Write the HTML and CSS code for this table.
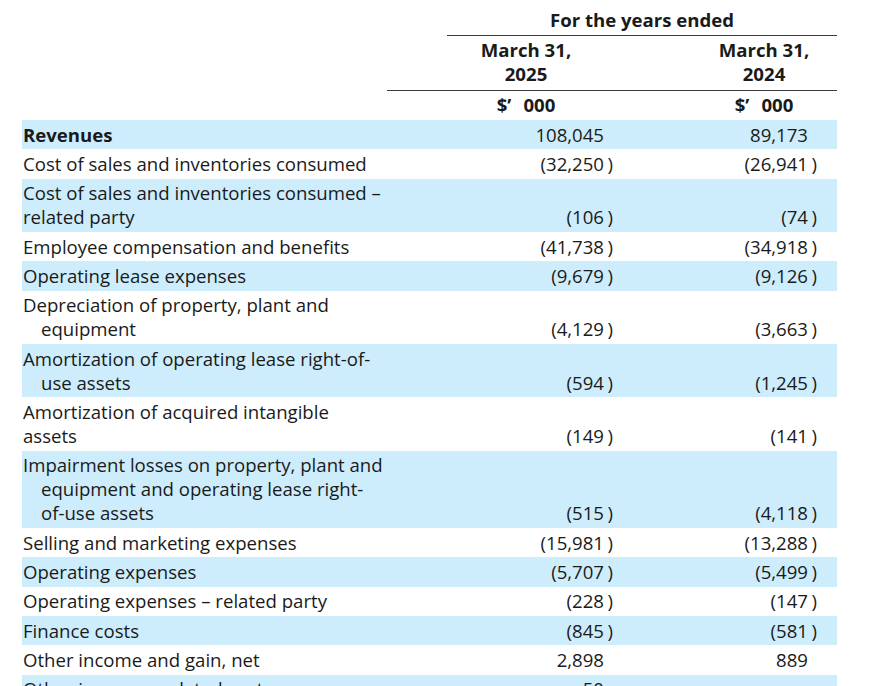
FILE: index.html
```html
<!DOCTYPE html>
<html lang="en">
<head>
<meta charset="utf-8">
<title>Statement of operations</title>
<link rel="stylesheet" href="styles.css">
</head>
<body>
<div class="sheet">
  <div class="head">
    <div class="h-years">For the years ended</div>
    <div class="h-dates">
      <div class="h-col1">March 31,<br>2025</div>
      <div class="h-col2">March 31,<br>2024</div>
    </div>
    <div class="h-units">
      <div class="h-col1">$’<span class="gap"></span>000</div>
      <div class="h-col2">$’<span class="gap"></span>000</div>
    </div>
  </div>
  <div class="rows">
    <div class="row"><div class="lbl strong"><span class="ln">Revenues</span></div><div class="num n1">108,045<span class="p"></span></div><div class="num n2">89,173<span class="p"></span></div></div>
    <div class="row"><div class="lbl"><span class="ln">Cost of sales and inventories consumed</span></div><div class="num n1">(32,250<span class="p">)</span></div><div class="num n2">(26,941<span class="p">)</span></div></div>
    <div class="row"><div class="lbl"><span class="ln">Cost of sales and inventories consumed –</span><span class="ln">related party</span></div><div class="num n1">(106<span class="p">)</span></div><div class="num n2">(74<span class="p">)</span></div></div>
    <div class="row"><div class="lbl"><span class="ln">Employee compensation and benefits</span></div><div class="num n1">(41,738<span class="p">)</span></div><div class="num n2">(34,918<span class="p">)</span></div></div>
    <div class="row"><div class="lbl"><span class="ln">Operating lease expenses</span></div><div class="num n1">(9,679<span class="p">)</span></div><div class="num n2">(9,126<span class="p">)</span></div></div>
    <div class="row"><div class="lbl"><span class="ln">Depreciation of property, plant and</span><span class="ln ind">equipment</span></div><div class="num n1">(4,129<span class="p">)</span></div><div class="num n2">(3,663<span class="p">)</span></div></div>
    <div class="row"><div class="lbl"><span class="ln">Amortization of operating lease right-of-</span><span class="ln ind">use assets</span></div><div class="num n1">(594<span class="p">)</span></div><div class="num n2">(1,245<span class="p">)</span></div></div>
    <div class="row"><div class="lbl"><span class="ln">Amortization of acquired intangible</span><span class="ln">assets</span></div><div class="num n1">(149<span class="p">)</span></div><div class="num n2">(141<span class="p">)</span></div></div>
    <div class="row"><div class="lbl"><span class="ln">Impairment losses on property, plant and</span><span class="ln ind">equipment and operating lease right-</span><span class="ln ind">of-use assets</span></div><div class="num n1">(515<span class="p">)</span></div><div class="num n2">(4,118<span class="p">)</span></div></div>
    <div class="row"><div class="lbl"><span class="ln">Selling and marketing expenses</span></div><div class="num n1">(15,981<span class="p">)</span></div><div class="num n2">(13,288<span class="p">)</span></div></div>
    <div class="row"><div class="lbl"><span class="ln">Operating expenses</span></div><div class="num n1">(5,707<span class="p">)</span></div><div class="num n2">(5,499<span class="p">)</span></div></div>
    <div class="row"><div class="lbl"><span class="ln">Operating expenses – related party</span></div><div class="num n1">(228<span class="p">)</span></div><div class="num n2">(147<span class="p">)</span></div></div>
    <div class="row"><div class="lbl"><span class="ln">Finance costs</span></div><div class="num n1">(845<span class="p">)</span></div><div class="num n2">(581<span class="p">)</span></div></div>
    <div class="row"><div class="lbl"><span class="ln">Other income and gain, net</span></div><div class="num n1">2,898<span class="p"></span></div><div class="num n2">889<span class="p"></span></div></div>
    <div class="row"><div class="lbl"><span class="ln">Other income – related party</span></div><div class="num n1">50<span class="p"></span></div><div class="num n2">–<span class="p"></span></div></div>
  </div>
</div>
</body>
</html>
```

FILE: styles.css
```css
html, body {
  margin: 0;
  padding: 0;
  background: #ffffff;
}

body {
  font-family: "Open Sans", "Noto Sans", "Liberation Sans", sans-serif;
  font-size: 18.6px;
  line-height: 24px;
  color: #1a1a1a;
  overflow: hidden;
  height: 686px;
}

.sheet {
  margin-left: 22px;
  width: 815px;
}

/* ---------- header ---------- */
.head {
  font-weight: 700;
}

.h-years {
  margin-left: 425px;
  padding: 8px 0 3px;
  text-align: center;
  border-bottom: 1px solid #3a3a3a;
}

.h-dates,
.h-units {
  display: grid;
  grid-template-columns: 425px 158px 86px 146px;
}

.h-dates {
  margin-left: 365px;
  grid-template-columns: 60px 158px 86px 146px;
  padding: 2px 0 4px;
  border-bottom: 1px solid #3a3a3a;
}

.h-units {
  padding: 1.5px 0 3.5px;
}

.gap {
  display: inline-block;
  width: 12px;
}

.h-dates .h-col1,
.h-units .h-col1 {
  grid-column: 2;
  text-align: center;
}

.h-dates .h-col2,
.h-units .h-col2 {
  grid-column: 4;
  text-align: center;
}

/* ---------- body rows ---------- */
.row {
  display: grid;
  grid-template-columns: 425px 173px 217px;
  align-items: end;
  padding: 2.68px 0;
}

.row:nth-child(odd) {
  background: #cdedfc;
}

.lbl {
  padding-left: 1px;
  white-space: nowrap;
}

.lbl.strong {
  font-weight: 700;
}

.ln {
  display: block;
}

.ln.ind {
  padding-left: 18px;
}

.num {
  text-align: right;
  white-space: nowrap;
}

.n1 {
  padding-right: 7px;
}

.n2 {
  padding-right: 20px;
}

.p {
  display: inline-block;
  width: 9px;
  text-align: right;
}
```
